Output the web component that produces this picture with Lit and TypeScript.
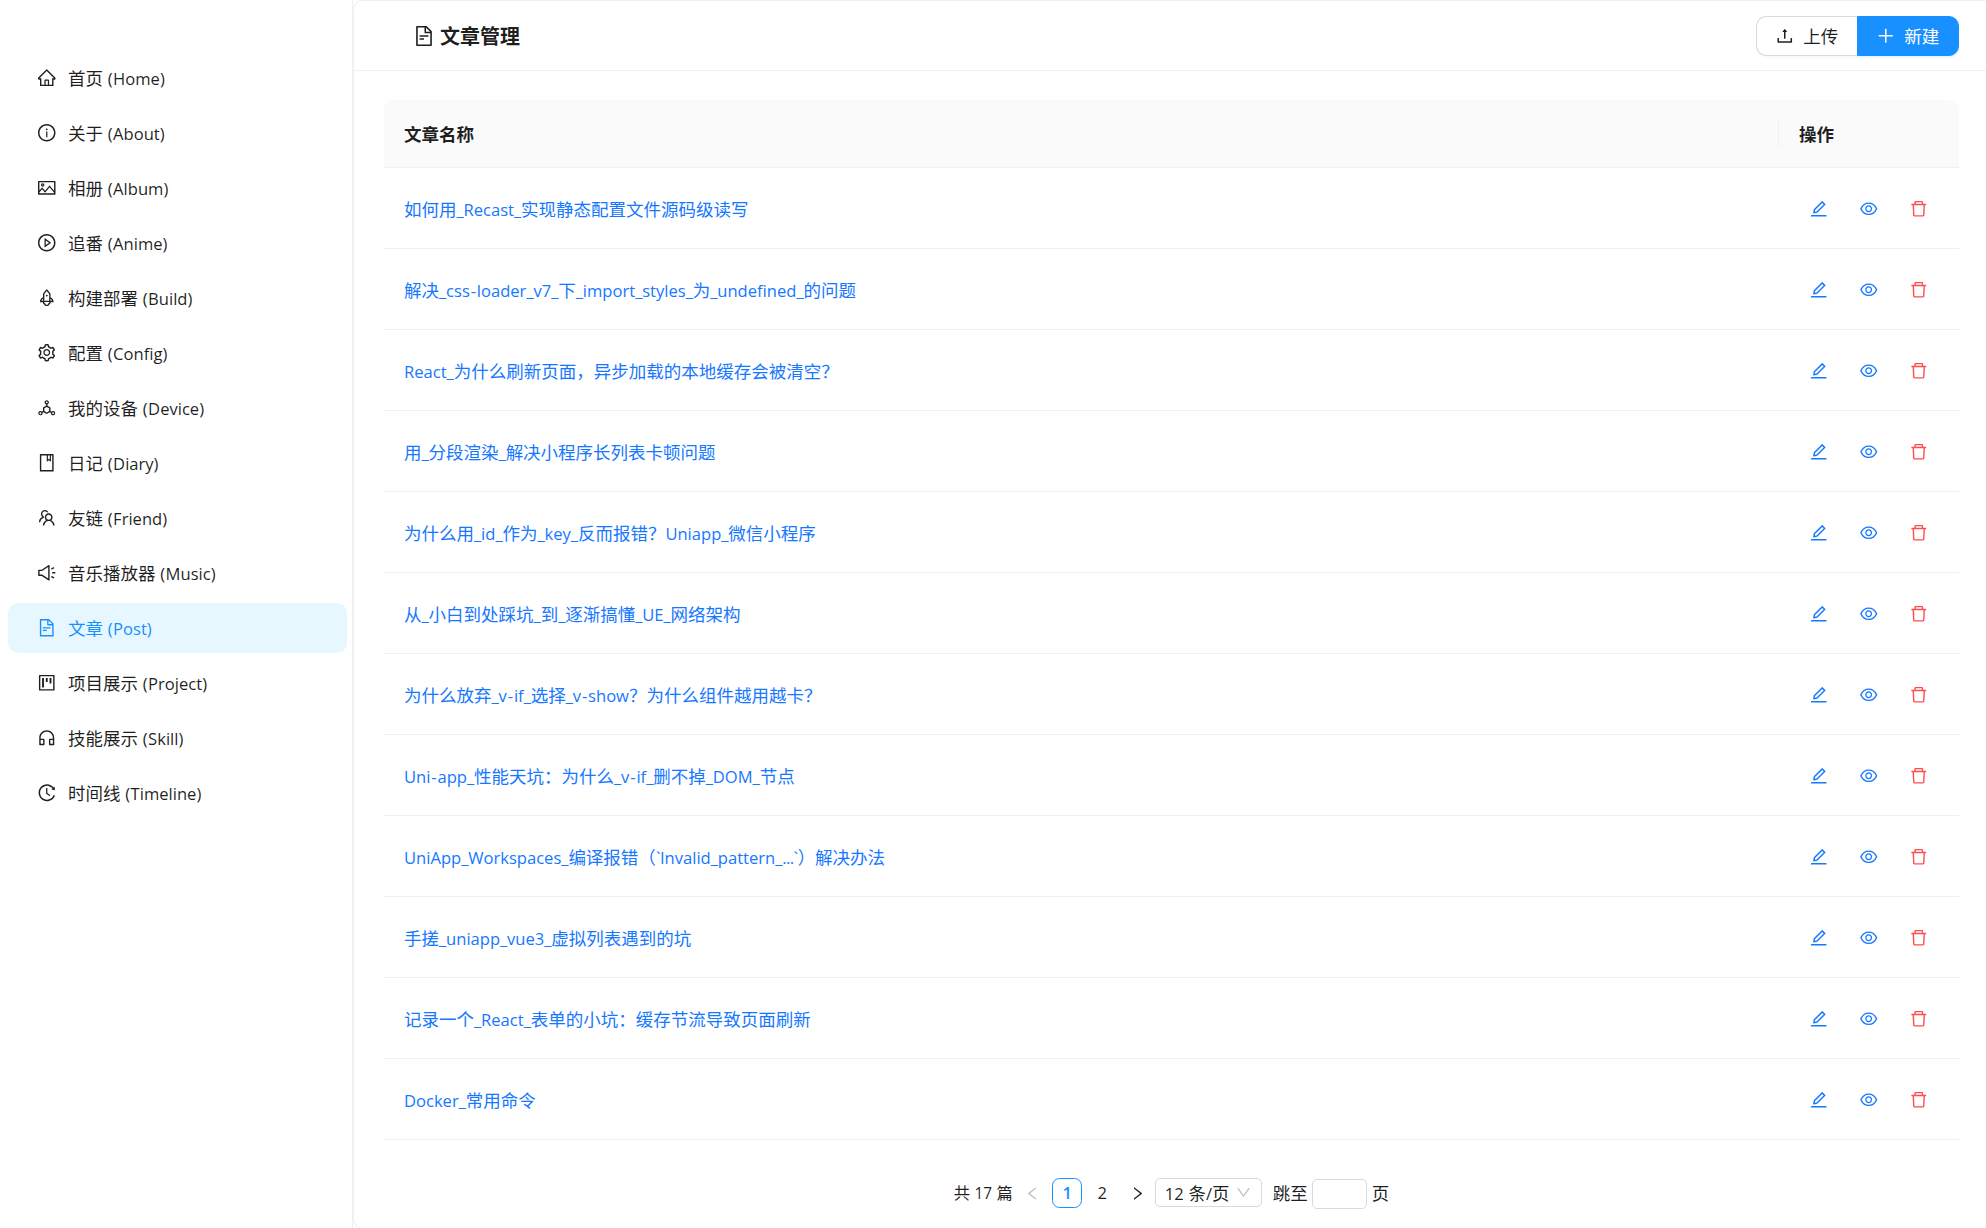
import { LitElement, html, css, svg } from "lit";
import { customElement, property, state } from "lit/decorators.js";
import { classMap } from "lit/directives/class-map.js";

const RING =
  "M512 64C264.6 64 64 264.6 64 512s200.6 448 448 448 448-200.6 448-448S759.4 64 512 64zm0 820c-205.4 0-372-166.6-372-372s166.6-372 372-372 372 166.6 372 372-166.6 372-372 372z";

const ICONS: Record<string, string> = {
  home: "M946.5 505L560.1 118.8l-25.9-25.9a31.5 31.5 0 00-44.4 0L77.5 505a63.9 63.9 0 00-18.8 46c.4 35.2 29.7 63.3 64.9 63.3h42.5V940h691.8V614.3h43.4c17.1 0 33.2-6.7 45.3-18.8a63.6 63.6 0 0018.7-45.3c0-17-6.7-33.1-18.8-45.2zM568 868H456V664h112v204zm217.9-325.7V868H632V640c0-22.1-17.9-40-40-40H432c-22.1 0-40 17.9-40 40v228H238.1V542.3h-96l370-369.7 23.1 23.1L882 542.3h-96.1z",
  info: RING + "M464 336a48 48 0 1096 0 48 48 0 10-96 0zm72 112h-48c-4.4 0-8 3.6-8 8v272c0 4.4 3.6 8 8 8h48c4.4 0 8-3.6 8-8V456c0-4.4-3.6-8-8-8z",
  picture: "M928 160H96c-17.7 0-32 14.3-32 32v640c0 17.7 14.3 32 32 32h832c17.7 0 32-14.3 32-32V192c0-17.7-14.3-32-32-32zm-40 632H136v-39.9l138.5-164.3 150.1 178L658.1 489 888 761.6V792zm0-129.8L664.2 396.8c-3.2-3.8-9-3.8-12.2 0L424.6 666.4l-144-170.7c-3.2-3.8-9-3.8-12.2 0L136 652.7V232h752v430.2zM304 456a88 88 0 100-176 88 88 0 000 176zm0-116c15.5 0 28 12.5 28 28s-12.5 28-28 28-28-12.5-28-28 12.5-28 28-28z",
  play: RING + "M719.4 499.1l-296.1-215A15.9 15.9 0 00398 297v430c0 13.1 14.8 20.5 25.3 12.9l296.1-215a15.9 15.9 0 000-25.8zm-257.6 134V390.9L628.5 512 461.8 633.1z",
  rocket: "M864 736c0-111.6-65.4-208-160-252.9V317.3c0-15.1-5.3-29.7-15.1-41.2L536.5 95.4C530.1 87.8 521 84 512 84s-18.1 3.8-24.5 11.4L335.1 276.1a63.97 63.97 0 00-15.1 41.2v165.8C225.4 528 160 624.4 160 736h156.5c-2.3 7.2-3.5 15-3.5 23.8 0 22.1 7.6 43.7 21.4 60.8a97.2 97.2 0 0043.1 30.6c23.1 54 75.6 88.8 134.5 88.8 29.1 0 57.3-8.6 81.4-24.8 23.6-15.8 41.9-37.9 53-64a97 97 0 0043.1-30.5 97.52 97.52 0 0021.4-60.8c0-8.4-1.1-16.4-3.1-23.8H864zM762.3 621.4c9.4 14.6 17 30.3 22.5 46.6H700V558.7a211.6 211.6 0 0162.3 62.7zM388 483.1V318.8l124-147 124 147V668H388V483.1zM239.2 668c5.5-16.3 13.1-32 22.5-46.6 16.3-25.2 37.5-46.5 62.3-62.7V668h-84.8zm388.9 116.2c-5.2 3-11.2 4.2-17.1 3.4l-19.5-2.4-2.8 19.4c-5.4 37.9-38.4 66.5-76.7 66.5-38.3 0-71.3-28.6-76.7-66.5l-2.8-19.5-19.5 2.5a27.7 27.7 0 01-17.1-3.5c-8.7-5-14.1-14.3-14.1-24.4 0-10.6 5.9-19.4 14.6-23.8h231.3c8.8 4.5 14.6 13.3 14.6 23.8-.1 10.2-5.5 19.6-14.2 24.5zM464 400a48 48 0 1096 0 48 48 0 10-96 0z",
  setting: "M924.8 625.7l-65.5-56c3.1-19 4.7-38.4 4.7-57.8s-1.6-38.8-4.7-57.8l65.5-56a32.03 32.03 0 009.3-35.2l-.9-2.6a443.74 443.74 0 00-79.7-137.9l-1.8-2.1a32.12 32.12 0 00-35.1-9.5l-81.3 28.9c-30-24.6-63.5-44-99.7-57.6l-15.7-85a32.05 32.05 0 00-25.8-25.7l-2.7-.5c-52.1-9.4-106.9-9.4-159 0l-2.7.5a32.05 32.05 0 00-25.8 25.7l-15.8 85.4a351.86 351.86 0 00-99 57.4l-81.9-29.1a32 32 0 00-35.1 9.5l-1.8 2.1a446.02 446.02 0 00-79.7 137.9l-.9 2.6c-4.5 12.5-.8 26.5 9.3 35.2l66.3 56.6c-3.1 18.8-4.6 38-4.6 57.1 0 19.2 1.5 38.4 4.6 57.1L99 625.5a32.03 32.03 0 00-9.3 35.2l.9 2.6c18.1 50.4 44.9 96.9 79.7 137.9l1.8 2.1a32.12 32.12 0 0035.1 9.5l81.9-29.1c29.8 24.5 63.1 43.9 99 57.4l15.8 85.4a32.05 32.05 0 0025.8 25.7l2.7.5a449.4 449.4 0 00159 0l2.7-.5a32.05 32.05 0 0025.8-25.7l15.7-85a350 350 0 0099.7-57.6l81.3 28.9a32 32 0 0035.1-9.5l1.8-2.1c34.8-41.1 61.6-87.5 79.7-137.9l.9-2.6c4.5-12.3.8-26.3-9.3-35zM788.3 465.9c2.5 15.1 3.8 30.6 3.8 46.1s-1.3 31-3.8 46.1l-6.6 40.1 74.7 63.9a370.03 370.03 0 01-42.6 73.6L721 702.8l-31.4 25.8c-23.9 19.6-50.5 35-79.3 45.8l-38.1 14.3-17.9 97a377.5 377.5 0 01-85 0l-17.9-97.2-37.8-14.5c-28.5-10.8-55-26.2-78.7-45.7l-31.4-25.9-93.4 33.2c-17-22.9-31.2-47.6-42.6-73.6l75.5-64.5-6.5-40c-2.4-14.9-3.7-30.3-3.7-45.5 0-15.3 1.2-30.6 3.7-45.5l6.5-40-75.5-64.5c11.3-26.1 25.6-50.7 42.6-73.6l93.4 33.2 31.4-25.9c23.7-19.5 50.2-34.9 78.7-45.7l37.9-14.3 17.9-97.2c28.1-3.2 56.8-3.2 85 0l17.9 97 38.1 14.3c28.7 10.8 55.4 26.2 79.3 45.8l31.4 25.8 92.8-32.9c17 22.9 31.2 47.6 42.6 73.6L781.8 426l6.5 39.9zM512 326c-97.2 0-176 78.8-176 176s78.8 176 176 176 176-78.8 176-176-78.8-176-176-176zm79.2 255.2A111.6 111.6 0 01512 614c-29.9 0-58-11.7-79.2-32.8A111.6 111.6 0 01400 502c0-29.9 11.7-58 32.8-79.2C454 401.6 482.1 390 512 390c29.9 0 58 11.6 79.2 32.8A111.6 111.6 0 01624 502c0 29.9-11.7 58-32.8 79.2z",
  device: "M888.3 693.2c-42.5-24.6-94.3-18-129.2 12.8l-53-30.7V523.6c0-15.7-8.4-30.3-22-38.1l-136-78.3v-67.1c44.2-15 76-56.8 76-106.1 0-61.9-50.1-112-112-112s-112 50.1-112 112c0 49.3 31.8 91.1 76 106.1v67.1l-136 78.3c-13.6 7.8-22 22.4-22 38.1v151.6l-53 30.7c-34.9-30.8-86.8-37.4-129.2-12.8-53.5 31-71.7 99.4-41 152.9 30.8 53.5 98.9 71.9 152.2 41 42.5-24.6 62.7-73 53.6-118.8l48.7-28.3 140.6 81c6.8 3.9 14.4 5.9 22 5.9s15.2-2 22-5.9L674.5 740l48.7 28.3c-9.1 45.7 11.2 94.2 53.6 118.8 53.3 30.9 121.5 12.6 152.2-41 30.8-53.6 12.6-122-40.7-152.9zm-673 138.4a47.6 47.6 0 01-65.2-17.6c-13.2-22.9-5.4-52.3 17.5-65.5a47.6 47.6 0 0165.2 17.6c13.2 22.9 5.4 52.3-17.5 65.5zM464 234a48.01 48.01 0 0196 0 48.01 48.01 0 01-96 0zm170 446.2l-122 70.3-122-70.3V539.8l122-70.3 122 70.3v140.4zm239.9 133.9c-13.2 22.9-42.4 30.8-65.2 17.6-22.8-13.2-30.7-42.6-17.5-65.5s42.4-30.8 65.2-17.6c22.9 13.2 30.7 42.5 17.5 65.5z",
  book: "M832 64H192c-17.7 0-32 14.3-32 32v832c0 17.7 14.3 32 32 32h640c17.7 0 32-14.3 32-32V96c0-17.7-14.3-32-32-32zm-260 72h96v209.9L621.5 312 572 347.4V136zm220 752H232V136h280v296.9c0 3.3 1 6.6 3 9.3a15.9 15.9 0 0022.3 3.7l83.8-59.9 81.4 59.4c2.7 2 6 3.1 9.4 3.1 8.8 0 16-7.2 16-16V136h64v752z",
  team: "M824.2 699.9a301.55 301.55 0 00-86.4-60.4C783.1 602.8 812 546.8 812 484c0-110.8-92.4-201.7-203.2-200-109.1 1.7-197 90.6-197 200 0 62.8 29 118.8 74.2 155.5a300.95 300.95 0 00-86.4 60.4C345 754.6 314 826.8 312 903.8a8 8 0 008 8.2h56c4.3 0 7.9-3.4 8-7.7 1.9-58 25.4-112.3 66.7-153.5A226.62 226.62 0 01612 684c60.9 0 118.2 23.7 161.3 66.8C814.6 792 838 846.3 840 904.3c.1 4.3 3.7 7.7 8 7.7h56a8 8 0 008-8.2c-2-77-33-149.2-87.8-203.9zM612 612c-34.2 0-66.4-13.3-90.5-37.5a126.86 126.86 0 01-37.5-91.8c.3-32.8 13.4-64.5 36.3-88 24-24.6 56.1-38.3 90.4-38.7 33.9-.3 66.8 12.9 91 36.6 24.8 24.3 38.4 56.8 38.4 91.4 0 34.2-13.3 66.3-37.5 90.5A127.3 127.3 0 01612 612zM361.5 510.4c-.9-8.7-1.4-17.5-1.4-26.4 0-15.9 1.5-31.4 4.3-46.5.7-3.6-1.2-7.3-4.5-8.8-13.6-6.1-26.1-14.5-36.9-25.1a127.54 127.54 0 01-38.7-95.4c.9-32.1 13.8-62.6 36.3-85.6 24.7-25.3 57.9-39.1 93.2-38.7 31.9.3 62.7 12.6 86 34.4 7.9 7.4 14.7 15.6 20.4 24.4 2 3.1 5.9 4.4 9.3 3.2 17.6-6.1 36.2-10.4 55.3-12.4 5.6-.6 8.8-6.6 6.3-11.6-32.5-64.3-98.9-108.7-175.7-109.9-110.9-1.7-203.3 89.2-203.3 199.9 0 62.8 28.9 118.8 74.2 155.5-31.8 14.7-61.1 35-86.5 60.4-54.8 54.7-85.8 126.9-87.8 204a8 8 0 008 8.2h56.1c4.3 0 7.9-3.4 8-7.7 1.9-58 25.4-112.3 66.7-153.5 29.4-29.4 65.4-49.8 104.7-59.7 3.9-1 6.5-4.7 6-8.7z",
  sound: "M625.9 115c-5.9 0-11.9 1.6-17.4 5.3L254 352H90c-8.8 0-16 7.2-16 16v288c0 8.8 7.2 16 16 16h164l354.5 231.7c5.5 3.6 11.6 5.3 17.4 5.3 16.7 0 32.1-13.3 32.1-32.1V147.1c0-18.8-15.4-32.1-32.1-32.1zM586 803L293.4 611.7l-18-11.7H146V424h129.4l17.9-11.7L586 221v582zm348-327H806c-8.8 0-16 7.2-16 16v40c0 8.8 7.2 16 16 16h128c8.8 0 16-7.2 16-16v-40c0-8.8-7.2-16-16-16zm-41.9 261.8l-110.3-63.7a15.9 15.9 0 00-21.7 5.9l-19.9 34.5c-4.4 7.6-1.8 17.4 5.8 21.8L856.3 800a15.9 15.9 0 0021.7-5.9l19.9-34.5c4.4-7.6 1.7-17.4-5.8-21.8zM760 344a15.9 15.9 0 0021.7 5.9L892 286.2c7.6-4.4 10.2-14.2 5.8-21.8L878 230a15.9 15.9 0 00-21.7-5.9L746 287.8a15.99 15.99 0 00-5.8 21.8L760 344z",
  file: "M854.6 288.6L639.4 73.4c-6-6-14.1-9.4-22.6-9.4H192c-17.7 0-32 14.3-32 32v832c0 17.7 14.3 32 32 32h640c17.7 0 32-14.3 32-32V311.3c0-8.5-3.4-16.7-9.4-22.7zM790.2 326H602V137.8L790.2 326zm1.8 562H232V136h302v216a42 42 0 0042 42h216v494zM504 618H320c-4.4 0-8 3.6-8 8v48c0 4.4 3.6 8 8 8h184c4.4 0 8-3.6 8-8v-48c0-4.4-3.6-8-8-8zM312 490v48c0 4.4 3.6 8 8 8h384c4.4 0 8-3.6 8-8v-48c0-4.4-3.6-8-8-8H320c-4.4 0-8 3.6-8 8z",
  project: "M280 752h80c4.4 0 8-3.6 8-8V280c0-4.4-3.6-8-8-8h-80c-4.4 0-8 3.6-8 8v464c0 4.4 3.6 8 8 8zm192-280h80c4.4 0 8-3.6 8-8V280c0-4.4-3.6-8-8-8h-80c-4.4 0-8 3.6-8 8v184c0 4.4 3.6 8 8 8zm192 72h80c4.4 0 8-3.6 8-8V280c0-4.4-3.6-8-8-8h-80c-4.4 0-8 3.6-8 8v256c0 4.4 3.6 8 8 8zm216-432H144c-17.7 0-32 14.3-32 32v736c0 17.7 14.3 32 32 32h736c17.7 0 32-14.3 32-32V144c0-17.7-14.3-32-32-32zm-40 728H184V184h656v656z",
  headset: "M512 128c-212.1 0-384 171.9-384 384v360c0 13.3 10.7 24 24 24h184c35.3 0 64-28.7 64-64V624c0-35.3-28.7-64-64-64H200v-48c0-172.3 139.7-312 312-312s312 139.7 312 312v48H688c-35.3 0-64 28.7-64 64v208c0 35.3 28.7 64 64 64h184c13.3 0 24-10.7 24-24V512c0-212.1-171.9-384-384-384zM328 632v192H200V632h128zm496 192H696V632h128v192z",
  history: "M536.1 273H488c-4.4 0-8 3.6-8 8v275.3c0 2.6 1.2 5 3.3 6.5l165.3 120.7c3.6 2.6 8.6 1.9 11.2-1.7l28.6-39c2.7-3.7 1.9-8.7-1.7-11.2L544.1 528.5V281c0-4.4-3.6-8-8-8zm219.8 75.2l156.8 38.3c5 1.2 9.9-2.6 9.9-7.7l.8-161.5c0-6.7-7.7-10.5-12.9-6.3L752.9 334.1a8 8 0 003 14.1zm167.7 301.1l-56.7-19.5a8 8 0 00-10.1 4.8c-1.9 5.1-3.9 10.1-6 15.1-17.8 42.1-43.3 80-75.9 112.5a353 353 0 01-112.5 75.9 352.18 352.18 0 01-137.7 27.8c-47.8 0-94.1-9.3-137.7-27.8a353 353 0 01-112.5-75.9c-32.5-32.5-58-70.4-75.9-112.5A353.44 353.44 0 01171 512c0-47.8 9.3-94.2 27.8-137.8 17.8-42.1 43.3-80 75.9-112.5a353 353 0 01112.5-75.9C430.6 167.3 477 158 524.8 158s94.1 9.3 137.7 27.8A353 353 0 01775 261.7c10.2 10.3 19.8 21 28.6 32.3l59.8-46.8C784.7 146.6 662.2 81.9 524.6 82 285 82.1 92.6 276.7 95 516.4 97.4 751.9 288.9 942 524.8 942c185.5 0 343.5-117.6 403.7-282.3 1.5-4.2-.7-8.9-4.9-10.4z",
  upload: "M400 317.7h73.9V656c0 4.4 3.6 8 8 8h60c4.4 0 8-3.6 8-8V317.7H624c6.7 0 10.4-7.7 6.3-12.9L518.3 163a8 8 0 00-12.6 0l-112 141.7c-4.1 5.3-.4 13 6.3 13zM878 626h-60c-4.4 0-8 3.6-8 8v154H214V634c0-4.4-3.6-8-8-8h-60c-4.4 0-8 3.6-8 8v198c0 17.7 14.3 32 32 32h684c17.7 0 32-14.3 32-32V634c0-4.4-3.6-8-8-8z",
  plus: "M482 152h60q8 0 8 8v314h314q8 0 8 8v60q0 8-8 8H550v314q0 8-8 8h-60q-8 0-8-8V550H160q-8 0-8-8v-60q0-8 8-8h314V160q0-8 8-8z",
  edit: "M257.7 752c2 0 4-.2 6-.5L431.9 722c2-.4 3.9-1.3 5.3-2.8l423.9-423.9a9.96 9.96 0 000-14.1L694.9 114.9c-1.9-1.9-4.4-2.9-7.1-2.9s-5.2 1-7.1 2.9L256.8 538.8c-1.5 1.5-2.4 3.3-2.8 5.3l-29.5 168.2a33.5 33.5 0 009.4 29.8c6.6 6.4 14.9 9.9 23.8 9.9zm67.4-174.4L687.8 215l73.3 73.3-362.7 362.6-88.9 15.7 15.6-89zM880 836H144c-17.7 0-32 14.3-32 32v36c0 4.4 3.6 8 8 8h784c4.4 0 8-3.6 8-8v-36c0-17.7-14.3-32-32-32z",
  eye: "M942.2 486.2C847.4 286.5 704.1 186 512 186c-192.2 0-335.4 100.5-430.2 300.3a60.3 60.3 0 000 51.5C176.6 737.5 319.9 838 512 838c192.2 0 335.4-100.5 430.2-300.3 7.7-16.2 7.7-35 0-51.5zM512 766c-161.3 0-279.4-81.8-362.7-254C232.6 339.8 350.7 258 512 258c161.3 0 279.4 81.8 362.7 254C791.5 684.2 673.4 766 512 766zm-4-430c-97.2 0-176 78.8-176 176s78.8 176 176 176 176-78.8 176-176-78.8-176-176-176zm0 288c-61.9 0-112-50.1-112-112s50.1-112 112-112 112 50.1 112 112-50.1 112-112 112z",
  trash: "M360 184h-8c4.4 0 8-3.6 8-8v8h304v-8c0 4.4 3.6 8 8 8h-8v72h72v-80c0-35.3-28.7-64-64-64H352c-35.3 0-64 28.7-64 64v80h72v-72zm504 72H160c-17.7 0-32 14.3-32 32v32c0 4.4 3.6 8 8 8h60.4l24.7 523c1.6 34.1 29.8 61 63.9 61h454c34.2 0 62.3-26.8 63.9-61l24.7-523H888c4.4 0 8-3.6 8-8v-32c0-17.7-14.3-32-32-32zM731.3 840H292.7l-24.2-512h487l-24.2 512z",
  left: "M724 218.3V141c0-6.7-7.7-10.4-12.9-6.3L260.3 486.8a31.86 31.86 0 000 50.3l450.8 352.1c5.3 4.1 12.9.4 12.9-6.3v-77.3c0-4.9-2.3-9.6-6.1-12.6l-360-281 360-281.1c3.8-3 6.1-7.7 6.1-12.6z",
  right: "M765.7 486.8L314.9 134.7A7.97 7.97 0 00302 141v77.3c0 4.9 2.3 9.6 6.1 12.6l360 281.1-360 281.1c-3.9 3-6.1 7.7-6.1 12.6V883c0 6.7 7.7 10.4 12.9 6.3l450.8-352.1a31.96 31.96 0 000-50.4z",
  down: "M884 256h-75c-5.1 0-9.9 2.5-12.9 6.6L512 654.2 227.9 262.6c-3-4.1-7.8-6.6-12.9-6.6h-75c-6.5 0-10.3 7.4-6.5 12.7l352.6 486.1c12.8 17.6 39 17.6 51.7 0l352.6-486.1c3.9-5.3.1-12.7-6.4-12.7z",
};

const icon = (name: string) => html`<svg class="icon" viewBox="64 64 896 896" aria-hidden="true">
  ${svg`<path d=${ICONS[name]}></path>`}
</svg>`;

const SPACING: Record<string, string> = {
  "-": "hyphen",
  _: "underscore",
  ".": "dot",
  "`": "tick",
  " ": "space",
  "(": "paren",
  ")": "paren",
};

/* Latin runs get their own face and size so that they sit evenly beside Han glyphs;
   punctuation inside them is spaced separately. */
const latin = (run: string) =>
  run
    .split(/([-_.` ()])/)
    .filter((part) => part !== "")
    .map((part) => (SPACING[part] ? html`<span class=${SPACING[part]}>${part}</span>` : part));

const mixed = (text: string) =>
  text
    .split(/([\x20-\x7e]+)/)
    .filter((run) => run !== "")
    .map((run) => (/^[\x20-\x7e]/.test(run) ? html`<span class="latin">${latin(run)}</span>` : run));

const shared = css`
  *,
  *::before,
  *::after {
    box-sizing: border-box;
  }
  :host {
    font-family: "Noto Sans CJK SC", "Open Sans", sans-serif;
    font-size: 17.5px;
    line-height: 27.5px;
    color: rgba(0, 0, 0, 0.88);
  }
  .icon {
    display: block;
    flex: none;
    width: 1em;
    height: 1em;
    fill: currentColor;
  }
  .latin {
    font-family: "Open Sans", "Noto Sans", sans-serif;
    font-size: 0.947em;
    line-height: 1;
    white-space: pre;
  }
  .hyphen {
    padding: 0 0.85px;
  }
  .underscore {
    letter-spacing: -0.2px;
  }
  .dot {
    letter-spacing: -0.6px;
  }
  .tick {
    letter-spacing: -0.5px;
  }
  .space {
    letter-spacing: 0.5px;
  }
  .paren {
    letter-spacing: 0.4px;
  }
`;

const MENU: [string, string][] = [
  ["home", "首页 (Home)"],
  ["info", "关于 (About)"],
  ["picture", "相册 (Album)"],
  ["play", "追番 (Anime)"],
  ["rocket", "构建部署 (Build)"],
  ["setting", "配置 (Config)"],
  ["device", "我的设备 (Device)"],
  ["book", "日记 (Diary)"],
  ["team", "友链 (Friend)"],
  ["sound", "音乐播放器 (Music)"],
  ["file", "文章 (Post)"],
  ["project", "项目展示 (Project)"],
  ["headset", "技能展示 (Skill)"],
  ["history", "时间线 (Timeline)"],
];

@customElement("side-menu")
class SideMenu extends LitElement {
  @state() private selected = "file";

  static styles = [
    shared,
    css`
      :host {
        display: block;
        flex: none;
        width: 353px;
        border-right: 1px solid #f0f0f0;
        padding: 53px 5px 0 8px;
      }
      .menu {
        display: flex;
        flex-direction: column;
        gap: 5px;
      }
      .item {
        display: flex;
        align-items: center;
        gap: 12.5px;
        height: 50px;
        padding-left: 30px;
        border-radius: 10px;
        white-space: nowrap;
        cursor: pointer;
      }
      .item.selected {
        background: #e6f7ff;
        color: #1890ff;
      }
      .label {
        padding-bottom: 1px;
      }
    `,
  ];

  render() {
    return html`<nav class="menu">
      ${MENU.map(
        ([name, label]) => html`<div
          class=${classMap({ item: true, selected: name === this.selected })}
          @click=${() => (this.selected = name)}
        >
          ${icon(name)}<span class="label">${mixed(label)}</span>
        </div>`
      )}
    </nav>`;
  }
}

@customElement("post-table")
class PostTable extends LitElement {
  @property({ attribute: false }) rows: string[] = [];

  static styles = [
    shared,
    css`
      :host {
        display: block;
      }
      .row {
        display: grid;
        grid-template-columns: 1fr 180px;
        align-items: center;
        height: 81px;
        padding-top: 2px;
        border-bottom: 1px solid #f0f0f0;
      }
      .row.head {
        height: 68px;
        padding-top: 0;
        background: #fafafa;
        border-radius: 10px 10px 0 0;
        font-weight: 700;
      }
      .name {
        display: flex;
        align-items: center;
        height: 27px;
        padding-left: 20px;
      }
      .head .name {
        border-right: 1px solid #f0f0f0;
      }
      .title {
        color: #1677ff;
        white-space: nowrap;
        cursor: pointer;
      }
      .ops {
        padding-left: 20px;
      }
      .actions {
        display: flex;
        gap: 32.5px;
        padding-left: 31.25px;
        color: #1677ff;
      }
      .danger {
        color: #ff4d4f;
      }
    `,
  ];

  render() {
    return html`
      <div class="row head">
        <div class="name">文章名称</div>
        <div class="ops">操作</div>
      </div>
      ${this.rows.map(
        (title) => html`<div class="row">
          <div class="name"><a class="title">${mixed(title)}</a></div>
          <div class="actions">
            <span>${icon("edit")}</span>
            <span>${icon("eye")}</span>
            <span class="danger">${icon("trash")}</span>
          </div>
        </div>`
      )}
    `;
  }
}

@customElement("page-bar")
class PageBar extends LitElement {
  @state() private page = 1;

  static styles = [
    shared,
    css`
      :host {
        display: flex;
        align-items: center;
        justify-content: center;
        height: 30px;
        white-space: nowrap;
      }
      .total {
        width: 62px;
        font-size: 16.25px;
      }
      .arrow,
      .page {
        display: flex;
        align-items: center;
        justify-content: center;
        width: 30px;
        height: 30px;
      }
      .arrow {
        font-size: 15px;
      }
      .arrow.off {
        color: rgba(0, 0, 0, 0.25);
        width: 33.5px;
        margin-right: 3px;
      }
      .next {
        margin-left: 5.5px;
      }
      .page {
        border: 1px solid transparent;
        border-radius: 7.5px;
      }
      .page.current {
        border-color: #1890ff;
        color: #1890ff;
        font-weight: 600;
      }
      .page + .page {
        margin-left: 5px;
      }
      .size {
        display: flex;
        align-items: center;
        justify-content: space-between;
        width: 107px;
        height: 29px;
        margin: 0 11px 1px 2px;
        padding: 0 10px 0 9px;
        border: 1px solid #d9d9d9;
        border-radius: 5px;
      }
      .size .icon {
        width: 15px;
        height: 15px;
        color: rgba(0, 0, 0, 0.25);
      }
      .jump {
        width: 55px;
        height: 30px;
        margin: 1px 5px 0 4px;
        border: 1px solid #d9d9d9;
        border-radius: 5px;
        background: #fff;
      }
    `,
  ];

  render() {
    return html`
      <span class="total">${mixed("共 17 篇")}</span>
      <span class="arrow off">${icon("left")}</span>
      ${[1, 2].map(
        (n) => html`<span
          class=${classMap({ page: true, current: n === this.page })}
          @click=${() => (this.page = n)}
          >${mixed(String(n))}</span
        >`
      )}
      <span class="arrow next">${icon("right")}</span>
      <span class="size"><span>${mixed("12 条/页")}</span>${icon("down")}</span>
      <span>跳至</span>
      <input class="jump" aria-label="跳至" />
      <span>页</span>
    `;
  }
}

const POSTS = [
  "如何用_Recast_实现静态配置文件源码级读写",
  "解决_css-loader_v7_下_import_styles_为_undefined_的问题",
  "React_为什么刷新页面，异步加载的本地缓存会被清空？",
  "用_分段渲染_解决小程序长列表卡顿问题",
  "为什么用_id_作为_key_反而报错？Uniapp_微信小程序",
  "从_小白到处踩坑_到_逐渐搞懂_UE_网络架构",
  "为什么放弃_v-if_选择_v-show？为什么组件越用越卡？",
  "Uni-app_性能天坑：为什么_v-if_删不掉_DOM_节点",
  "UniApp_Workspaces_编译报错（`Invalid_pattern_...`）解决办法",
  "手搓_uniapp_vue3_虚拟列表遇到的坑",
  "记录一个_React_表单的小坑：缓存节流导致页面刷新",
  "Docker_常用命令",
];

@customElement("app-root")
class AppRoot extends LitElement {
  static styles = [
    shared,
    css`
      :host {
        display: flex;
        height: 100vh;
        overflow: hidden;
        background: #fff;
      }
      .card {
        flex: 1;
        min-width: 0;
        display: flex;
        flex-direction: column;
        margin-bottom: -1px;
        border: 1px solid #f0f0f0;
        border-right: 0;
        border-radius: 10px 0 0 10px;
      }
      .header {
        display: flex;
        align-items: center;
        justify-content: space-between;
        height: 70px;
        padding: 0 27px 0 60px;
        border-bottom: 1px solid #f0f0f0;
      }
      .heading {
        display: flex;
        align-items: center;
        gap: 6px;
        margin: 0;
        font-size: 20px;
        font-weight: 700;
      }
      .buttons {
        display: flex;
      }
      .btn {
        display: flex;
        align-items: center;
        gap: 10px;
        height: 40px;
        padding: 0 18.75px;
        border: 1px solid #d9d9d9;
        font: inherit;
        color: inherit;
        background: #fff;
        cursor: pointer;
      }
      .upload {
        width: 101px;
        border-right: 0;
        border-radius: 10px 0 0 10px;
        box-shadow: 0 2px 0 rgba(0, 0, 0, 0.02);
      }
      .create {
        width: 102px;
        border-color: #1890ff;
        border-radius: 0 10px 10px 0;
        background: #1890ff;
        color: #fff;
        box-shadow: 0 2px 0 rgba(5, 175, 255, 0.1);
      }
      .body {
        display: flex;
        flex-direction: column;
        gap: 38px;
        padding: 29px 27px 0 30px;
      }
    `,
  ];

  render() {
    return html`
      <side-menu></side-menu>
      <main class="card">
        <header class="header">
          <h1 class="heading">${icon("file")}<span>文章管理</span></h1>
          <div class="buttons">
            <button class="btn upload">${icon("upload")}<span>上传</span></button>
            <button class="btn create">${icon("plus")}<span>新建</span></button>
          </div>
        </header>
        <section class="body">
          <post-table .rows=${POSTS}></post-table>
          <page-bar></page-bar>
        </section>
      </main>
    `;
  }
}
